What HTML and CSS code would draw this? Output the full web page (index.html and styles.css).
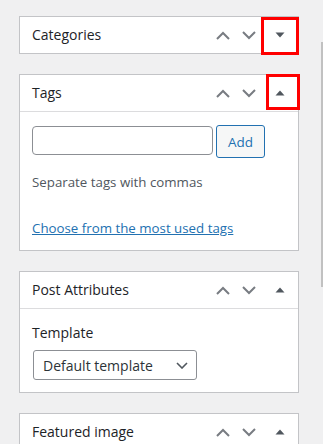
FILE: index.html
```html
<!DOCTYPE html>
<html lang="en">
<head>
  <meta charset="UTF-8">
  <meta name="viewport" content="width=device-width, initial-scale=1.0">
  <title>Post sidebar</title>
  <link rel="stylesheet" href="styles.css">
</head>
<body>
  <div class="sidebar">

    <div class="postbox">
      <div class="postbox-header">
        <h2 class="hndle">Categories</h2>
        <button class="handle-btn" aria-label="Move up">
          <svg width="14" height="9" viewBox="0 0 14 9"><path d="M1 8 L7 2 L13 8" fill="none" stroke="#787c82" stroke-width="2"/></svg>
        </button>
        <button class="handle-btn" aria-label="Move down">
          <svg width="14" height="9" viewBox="0 0 14 9"><path d="M1 1 L7 7 L13 1" fill="none" stroke="#787c82" stroke-width="2"/></svg>
        </button>
        <button class="toggle-btn" aria-label="Expand">
          <svg width="10" height="6" viewBox="0 0 10 6"><path d="M0.5 0.5 H9.5 L5 5.5 Z" fill="#50575e"/></svg>
          <span class="mark mark-first"></span>
        </button>
      </div>
    </div>

    <div class="postbox">
      <div class="postbox-header bordered">
        <h2 class="hndle">Tags</h2>
        <button class="handle-btn" aria-label="Move up">
          <svg width="14" height="9" viewBox="0 0 14 9"><path d="M1 8 L7 2 L13 8" fill="none" stroke="#787c82" stroke-width="2"/></svg>
        </button>
        <button class="handle-btn" aria-label="Move down">
          <svg width="14" height="9" viewBox="0 0 14 9"><path d="M1 1 L7 7 L13 1" fill="none" stroke="#787c82" stroke-width="2"/></svg>
        </button>
        <button class="toggle-btn" aria-label="Collapse">
          <svg width="10" height="6" viewBox="0 0 10 6"><path d="M0.5 5.5 H9.5 L5 0.5 Z" fill="#50575e"/></svg>
          <span class="mark mark-second"></span>
        </button>
      </div>
      <div class="inside tags-inside">
        <div class="tag-add">
          <input type="text" class="tag-input">
          <button class="button">Add</button>
        </div>
        <p class="howto">Separate tags with commas</p>
        <a href="#" class="tag-link">Choose from the most used tags</a>
      </div>
    </div>

    <div class="postbox">
      <div class="postbox-header bordered">
        <h2 class="hndle">Post Attributes</h2>
        <button class="handle-btn" aria-label="Move up">
          <svg width="14" height="9" viewBox="0 0 14 9"><path d="M1 8 L7 2 L13 8" fill="none" stroke="#787c82" stroke-width="2"/></svg>
        </button>
        <button class="handle-btn" aria-label="Move down">
          <svg width="14" height="9" viewBox="0 0 14 9"><path d="M1 1 L7 7 L13 1" fill="none" stroke="#787c82" stroke-width="2"/></svg>
        </button>
        <button class="toggle-btn" aria-label="Collapse">
          <svg width="10" height="6" viewBox="0 0 10 6"><path d="M0.5 5.5 H9.5 L5 0.5 Z" fill="#50575e"/></svg>
        </button>
      </div>
      <div class="inside attr-inside">
        <p class="attr-label">Template</p>
        <div class="select">
          <span>Default template</span>
          <svg width="12" height="7" viewBox="0 0 12 7"><path d="M1 1 L6 6 L11 1" fill="none" stroke="#50575e" stroke-width="1.6"/></svg>
        </div>
      </div>
    </div>

    <div class="postbox">
      <div class="postbox-header">
        <h2 class="hndle">Featured image</h2>
        <button class="handle-btn" aria-label="Move up">
          <svg width="14" height="9" viewBox="0 0 14 9"><path d="M1 8 L7 2 L13 8" fill="none" stroke="#787c82" stroke-width="2"/></svg>
        </button>
        <button class="handle-btn" aria-label="Move down">
          <svg width="14" height="9" viewBox="0 0 14 9"><path d="M1 1 L7 7 L13 1" fill="none" stroke="#787c82" stroke-width="2"/></svg>
        </button>
        <button class="toggle-btn" aria-label="Collapse">
          <svg width="10" height="6" viewBox="0 0 10 6"><path d="M0.5 5.5 H9.5 L5 0.5 Z" fill="#50575e"/></svg>
        </button>
      </div>
    </div>

  </div>
  <div class="scrollbar"></div>
</body>
</html>
```

FILE: styles.css
```css
html {
  overflow: hidden;
}

body {
  margin: 0;
  padding: 0;
  background-color: #f0f0f1;
  font-family: "Open Sans", "Noto Sans", sans-serif;
  font-size: 13px;
  color: #1d2327;
  overflow: hidden;
  height: 444px;
}

.sidebar {
  width: 280px;
  padding: 16px 0 0 19px;
}

.postbox {
  background-color: #fff;
  border: 1px solid #c3c4c7;
  margin-bottom: 20px;
}

.postbox-header {
  display: flex;
  align-items: center;
  height: 36px;
}

.postbox-header.bordered {
  border-bottom: 1px solid #dcdcde;
}

.hndle {
  flex: 1;
  margin: 0;
  padding-left: 12px;
  font-size: 14px;
  font-weight: 400;
  line-height: 1;
}

.handle-btn, .toggle-btn {
  display: flex;
  align-items: center;
  justify-content: center;
  height: 36px;
  padding: 0;
  border: none;
  background: none;
}

.handle-btn {
  width: 26px;
}

.toggle-btn {
  position: relative;
  width: 36px;
}

.mark {
  position: absolute;
  border: 3px solid #ff0000;
  box-sizing: border-box;
}

.mark-first {
  left: -1px;
  top: 0;
  width: 38px;
  height: 38px;
}

.mark-second {
  left: 4px;
  top: -1px;
  width: 34px;
  height: 36px;
}

.inside {
  padding: 13px 12px 12px;
}

.tag-add {
  display: flex;
  align-items: flex-start;
  gap: 3px;
}

.tag-input {
  width: 181px;
  height: 29px;
  margin: 1px 0 0;
  padding: 0 8px;
  border: 1px solid #8c8f94;
  border-radius: 4px;
  box-sizing: border-box;
  outline: none;
}

.button {
  width: 49px;
  height: 33px;
  padding: 0;
  border: 1px solid #2271b1;
  border-radius: 3px;
  background-color: #f6f7f7;
  color: #2271b1;
  font-family: inherit;
  font-size: 13.5px;
}

.howto {
  margin: 14px 0 0;
  color: #50575e;
  font-size: 13.3px;
  line-height: 20px;
}

.tag-link {
  display: block;
  margin-top: 26px;
  color: #2271b1;
  font-size: 13.3px;
  text-decoration: underline;
  line-height: 20px;
}

.attr-inside {
  padding: 14px 12px 12px;
}

.attr-label {
  margin: 0;
  font-size: 14px;
  line-height: 20px;
}

.select {
  display: flex;
  align-items: center;
  justify-content: space-between;
  width: 164px;
  height: 30px;
  margin: 7px 0 0 1px;
  padding: 0 8px 0 9px;
  border: 1px solid #8c8f94;
  border-radius: 3px;
  box-sizing: border-box;
  color: #2c3338;
  font-size: 14px;
}

.scrollbar {
  position: absolute;
  right: 0;
  top: 42px;
  width: 2px;
  height: 245px;
  background-color: #c1c1c1;
}
```
